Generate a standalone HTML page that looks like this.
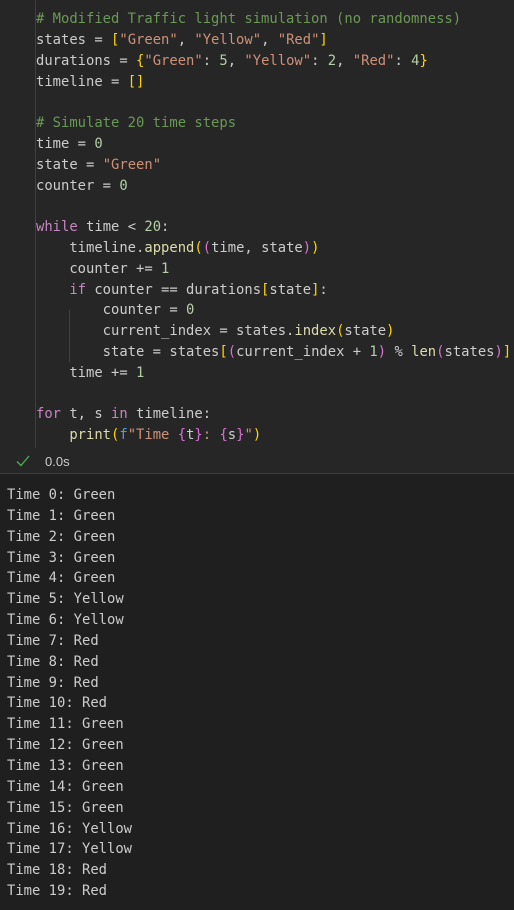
<!DOCTYPE html>
<html><head><meta charset="utf-8"><style>
html,body{margin:0;padding:0;width:514px;height:910px;overflow:hidden;background:#1f1f1f;}
body{font-family:"DejaVu Sans Mono","Liberation Mono",monospace;font-size:13.85px;color:#cccccc;}
#code{position:absolute;left:0;top:0;width:514px;height:473px;background:#262626;}
.ln{position:absolute;left:36px;white-space:pre;line-height:20.75px;height:20.75px;}
.c{color:#6a9955}.s{color:#ce9178}.g{color:#ffd700}.p{color:#da70d6}.k{color:#c586c0}
.n{color:#b5cea8}.f{color:#dcdcaa}.b{color:#569cd6}
#sep{position:absolute;left:0;top:473px;width:514px;height:1px;background:#3a3a3a;}
#out{position:absolute;left:7px;top:485px;white-space:pre;line-height:20.85px;color:#cccccc;}
.gl{position:absolute;width:1px;background:#404040;}
</style></head><body>
<div id="code">
<div class="gl" style="left:35px;top:0;height:448px"></div>
<div class="gl" style="left:69px;top:310px;height:52px"></div>
<div class="ln" style="top:9px"><span class="c"># Modified Traffic light simulation (no randomness)</span></div>
<div class="ln" style="top:30px">states = <span class="g">[</span><span class="s">"Green"</span>, <span class="s">"Yellow"</span>, <span class="s">"Red"</span><span class="g">]</span></div>
<div class="ln" style="top:51px">durations = <span class="g">{</span><span class="s">"Green"</span>: <span class="n">5</span>, <span class="s">"Yellow"</span>: <span class="n">2</span>, <span class="s">"Red"</span>: <span class="n">4</span><span class="g">}</span></div>
<div class="ln" style="top:72px">timeline = <span class="g">[]</span></div>
<div class="ln" style="top:113px"><span class="c"># Simulate 20 time steps</span></div>
<div class="ln" style="top:134px">time = <span class="n">0</span></div>
<div class="ln" style="top:155px">state = <span class="s">"Green"</span></div>
<div class="ln" style="top:176px">counter = <span class="n">0</span></div>
<div class="ln" style="top:217px"><span class="k">while</span> time &lt; <span class="n">20</span>:</div>
<div class="ln" style="top:238px">    timeline.<span class="f">append</span><span class="g">(</span><span class="p">(</span>time, state<span class="p">)</span><span class="g">)</span></div>
<div class="ln" style="top:259px">    counter += <span class="n">1</span></div>
<div class="ln" style="top:280px">    <span class="k">if</span> counter == durations<span class="g">[</span>state<span class="g">]</span>:</div>
<div class="ln" style="top:300px">        counter = <span class="n">0</span></div>
<div class="ln" style="top:321px">        current_index = states.<span class="f">index</span><span class="g">(</span>state<span class="g">)</span></div>
<div class="ln" style="top:342px">        state = states<span class="g">[</span><span class="p">(</span>current_index + <span class="n">1</span><span class="p">)</span> % <span class="f">len</span><span class="p">(</span>states<span class="p">)</span><span class="g">]</span></div>
<div class="ln" style="top:363px">    time += <span class="n">1</span></div>
<div class="ln" style="top:404px"><span class="k">for</span> t, s <span class="k">in</span> timeline:</div>
<div class="ln" style="top:425px">    <span class="f">print</span><span class="g">(</span><span class="b">f</span><span class="s">"Time </span><span class="p">{</span>t<span class="p">}</span><span class="s">: </span><span class="p">{</span>s<span class="p">}</span><span class="s">"</span><span class="g">)</span></div>
<svg style="position:absolute;left:16px;top:455px" width="14" height="12" viewBox="0 0 14 12"><path d="M1 6.5 L5 10.5 L13 1" fill="none" stroke="#4caf50" stroke-width="1.3"/></svg>
<div style="position:absolute;left:45px;top:454px;font-family:'Liberation Sans',sans-serif;font-size:13px;color:#cccccc;">0.0s</div>
</div>
<div id="sep"></div>
<div id="out">Time 0: Green
Time 1: Green
Time 2: Green
Time 3: Green
Time 4: Green
Time 5: Yellow
Time 6: Yellow
Time 7: Red
Time 8: Red
Time 9: Red
Time 10: Red
Time 11: Green
Time 12: Green
Time 13: Green
Time 14: Green
Time 15: Green
Time 16: Yellow
Time 17: Yellow
Time 18: Red
Time 19: Red</div>
</body></html>
